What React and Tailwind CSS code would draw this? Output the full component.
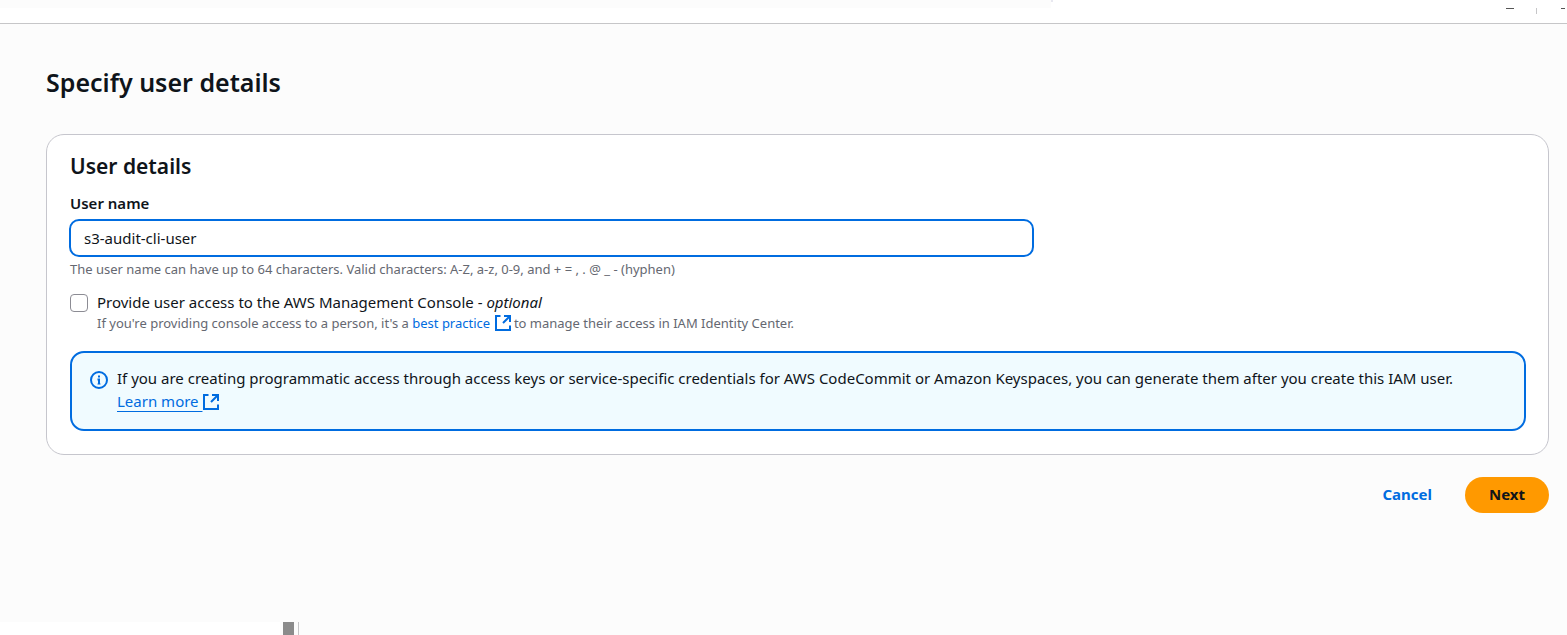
import { useState } from 'react';

function ExternalIcon() {
  return (
    <svg
      viewBox="0 0 16 16"
      className="ml-px inline-block size-4 align-[-3px]"
      fill="none"
      stroke="currentColor"
      strokeWidth="2"
      aria-hidden="true"
    >
      <path d="M5.5 1H1v14h14v-4.5" />
      <path d="M9 1h6v6M14.5 1.5 8 8" />
    </svg>
  );
}

function InfoIcon() {
  return (
    <svg
      viewBox="0 0 18 18"
      className="mt-1 size-[18px] shrink-0 text-[#006ce0]"
      fill="none"
      stroke="currentColor"
      strokeWidth="2"
      aria-hidden="true"
    >
      <circle cx="9" cy="9" r="8" />
      <path d="M7.5 8.5H9V13M9 4.5v2" />
      <path d="M7.5 13h3" strokeWidth="1" />
    </svg>
  );
}

function TopBar() {
  return (
    <header className="flex h-6 items-start border-b border-[#c6c6c8] bg-white">
      <div className="h-2 w-[1051px] bg-[#fcfcfc]" />
      <div className="h-0.5 w-0.5 bg-[#e8e8f0]" />
      <div className="ml-auto flex items-start pt-2">
        <span className="mr-[22px] h-px w-2 bg-[#555555]" />
        <span className="mr-6 h-[6px] w-px bg-[#c6c6c8]" />
        <span className="mr-0.5 h-px w-1 bg-[#555555]" />
      </div>
    </header>
  );
}

function UserDetails() {
  const [name, setName] = useState('s3-audit-cli-user');
  return (
    <section className="rounded-[18px] border border-[#c6c6cd] bg-white px-[23px] pt-4 pb-[23px]">
      <h2 className="text-[21px] leading-[30px] font-semibold">User details</h2>
      <label htmlFor="user-name" className="mt-3 block text-[15px] leading-5 font-semibold">
        User name
      </label>
      <input
        id="user-name"
        type="text"
        value={name}
        onChange={(e) => setName(e.target.value)}
        className="-ml-px mt-[6px] block h-[38px] w-[68%] max-w-[965px] rounded-[10px] border-2 border-[#006ce0] bg-white px-[13px] text-[15px] outline-none"
      />
      <p className="mt-0.5 text-[13px] leading-5 text-[#656871]">
        The user name can have up to 64 characters. Valid characters: A-Z, a-z, 0-9, and + = , . @ _ - (hyphen)
      </p>

      <div className="mt-3 flex items-start gap-[9px]">
        <input
          id="console-access"
          type="checkbox"
          className="mt-[3px] size-[18px] appearance-none rounded-[4px] border border-[#8c8c94] bg-white checked:bg-[#006ce0]"
        />
        <div>
          <label htmlFor="console-access" className="block text-[15px] leading-[22px]">
            Provide user access to the AWS Management Console - <em>optional</em>
          </label>
          <p className="text-[13px] leading-5 text-[#656871]">
            If you&apos;re providing console access to a person, it&apos;s a{' '}
            <a href="#best-practice" className="text-[#006ce0]">
              best practice <ExternalIcon />
            </a>{' '}
            to manage their access in IAM Identity Center.
          </p>
        </div>
      </div>

      <div className="mt-[18px] -mr-px flex items-start gap-[9px] rounded-[14px] border-2 border-[#006ce0] bg-[#f0fbff] px-[18px] pt-[14px] pb-4">
        <InfoIcon />
        <p className="text-[15px] leading-[23px]">
          If you are creating programmatic access through access keys or service-specific credentials for AWS CodeCommit
          or Amazon Keyspaces, you can generate them after you create this IAM user.
          <br />
          <a href="#learn-more" className="text-[#006ce0] underline decoration-1 underline-offset-4">
            Learn more <ExternalIcon />
          </a>
        </p>
      </div>
    </section>
  );
}

export default function App() {
  return (
    <div className="flex min-h-screen flex-col bg-[#fcfcfc] font-['Noto_Sans','Open_Sans',sans-serif] text-[#0f141a]">
      <TopBar />
      <main className="flex-1 pt-[38px] pr-[18px] pl-[46px]">
        <h1 className="mb-8 text-[25px] leading-10 font-semibold">Specify user details</h1>
        <UserDetails />
        <div className="mt-[22px] flex items-center justify-end gap-[33px]">
          <button type="button" className="pb-0.5 text-[15px] leading-5 font-bold text-[#006ce0]">
            Cancel
          </button>
          <button type="button" className="h-9 w-[84px] rounded-full bg-[#ff9900] pb-0.5 text-[15px] leading-5 font-bold">
            Next
          </button>
        </div>
      </main>
      <footer className="flex h-[13px]">
        <div className="w-[280px] bg-white" />
        <div className="ml-[3px] w-[11px] bg-[#8b8b8b]" />
        <div className="ml-1 w-px bg-[#c6c6c8]" />
      </footer>
    </div>
  );
}
